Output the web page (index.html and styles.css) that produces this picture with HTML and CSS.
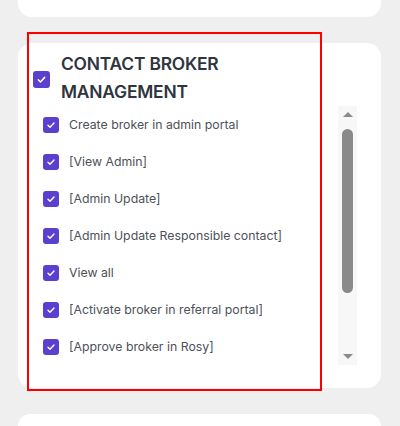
FILE: index.html
```html
<!DOCTYPE html>
<html>
<head>
<meta charset="utf-8">
<link rel="stylesheet" href="styles.css">
</head>
<body>
<div class="page">
  <div class="card card-top"></div>
  <div class="card card-main">
    <div class="header">
      <span class="cb cb-lg"><svg viewBox="0 0 16 16"><path d="M5 8.3l2 2 4-4.3" /></svg></span>
      <h2 class="title">CONTACT BROKER<br>MANAGEMENT</h2>
    </div>
    <div class="body">
      <ul class="list">
        <li class="item"><span class="cb"><svg viewBox="0 0 16 16"><path d="M5 8.3l2 2 4-4.3" /></svg></span><span class="label">Create broker in admin portal</span></li>
        <li class="item"><span class="cb"><svg viewBox="0 0 16 16"><path d="M5 8.3l2 2 4-4.3" /></svg></span><span class="label">[View Admin]</span></li>
        <li class="item"><span class="cb"><svg viewBox="0 0 16 16"><path d="M5 8.3l2 2 4-4.3" /></svg></span><span class="label">[Admin Update]</span></li>
        <li class="item"><span class="cb"><svg viewBox="0 0 16 16"><path d="M5 8.3l2 2 4-4.3" /></svg></span><span class="label">[Admin Update Responsible contact]</span></li>
        <li class="item"><span class="cb"><svg viewBox="0 0 16 16"><path d="M5 8.3l2 2 4-4.3" /></svg></span><span class="label">View all</span></li>
        <li class="item"><span class="cb"><svg viewBox="0 0 16 16"><path d="M5 8.3l2 2 4-4.3" /></svg></span><span class="label">[Activate broker in referral portal]</span></li>
        <li class="item"><span class="cb"><svg viewBox="0 0 16 16"><path d="M5 8.3l2 2 4-4.3" /></svg></span><span class="label">[Approve broker in Rosy]</span></li>
      </ul>
      <div class="scrollbar">
        <div class="sb-btn"><span class="arrow-up"></span></div>
        <div class="sb-track"><div class="sb-thumb"></div></div>
        <div class="sb-btn"><span class="arrow-down"></span></div>
      </div>
    </div>
    <div class="highlight"></div>
  </div>
  <div class="card card-bottom"></div>
</div>
</body>
</html>
```
FILE: styles.css
```css
html, body {
  margin: 0;
  padding: 0;
}
body {
  background: #efefef;
  font-family: Inter, "Noto Sans", sans-serif;
  width: 400px;
  height: 426px;
  overflow: hidden;
}
.page {
  display: flex;
  flex-direction: column;
  gap: 26px;
  padding: 0 19px 0 18px;
}
.card {
  background: #ffffff;
  border-radius: 14px;
}
.card-top {
  height: 17px;
  border-radius: 0 0 14px 14px;
}
.card-main {
  position: relative;
  height: 345px;
  padding-top: 7px;
  box-sizing: border-box;
}
.card-bottom {
  height: 12px;
  border-radius: 14px 14px 0 0;
}
.header {
  display: flex;
  align-items: center;
  padding-left: 15px;
  gap: 11px;
}
.title {
  margin: 0;
  font-size: 17.4px;
  line-height: 28px;
  font-weight: 600;
  color: #2f3540;
  letter-spacing: -0.2px;
}
.cb {
  width: 16px;
  height: 16px;
  border-radius: 3px;
  background: #5b3fcf;
  display: inline-flex;
  flex: none;
}
.cb-lg {
  width: 17px;
  height: 17px;
  margin-top: 3px;
}
.cb svg {
  width: 100%;
  height: 100%;
  fill: none;
  stroke: #ffffff;
  stroke-width: 1.4;
  stroke-linecap: round;
  stroke-linejoin: round;
}
.body {
  display: flex;
  padding-right: 24px;
}
.list {
  flex: 1;
  list-style: none;
  margin: 0;
  padding: 0 0 0 25px;
}
.item {
  height: 37px;
  display: flex;
  align-items: center;
  gap: 10px;
}
.label {
  font-size: 12.3px;
  color: #4d5158;
  margin-top: -1px;
}
.scrollbar {
  width: 19px;
  height: 259px;
  background: #f7f7f7;
  display: flex;
  flex-direction: column;
  align-items: center;
}
.sb-btn {
  height: 17px;
  display: flex;
  align-items: center;
  justify-content: center;
  flex: none;
}
.arrow-up {
  width: 0;
  height: 0;
  border-left: 5px solid transparent;
  border-right: 5px solid transparent;
  border-bottom: 5px solid #8a8a8a;
}
.arrow-down {
  width: 0;
  height: 0;
  border-left: 5px solid transparent;
  border-right: 5px solid transparent;
  border-top: 5px solid #8a8a8a;
}
.sb-track {
  flex: 1;
  padding-top: 6px;
}
.sb-thumb {
  width: 11px;
  height: 164px;
  border-radius: 6px;
  background: #8a8a8a;
}
.highlight {
  position: absolute;
  left: 9px;
  top: -11px;
  width: 291px;
  height: 355px;
  border: 2px solid #ff0000;
  pointer-events: none;
}
```
